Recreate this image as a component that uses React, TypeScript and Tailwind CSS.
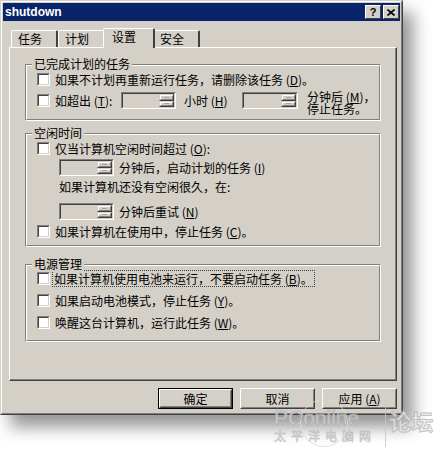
import React from "react";

const FONT = "font-['Noto_Sans_CJK_SC','Noto_Sans',sans-serif]";

// sunken 2px edge (checkbox, edit box)
function Check() {
  return (
    <span className="block w-[13px] h-[13px] shrink-0 border border-t-[#808080] border-l-[#808080] border-b-white border-r-white">
      <span className="block w-full h-full bg-white border border-t-[#404040] border-l-[#404040] border-b-[#d4d0c8] border-r-[#d4d0c8]" />
    </span>
  );
}

function SpinButton() {
  return (
    <div className="flex-1 border border-t-[#d4d0c8] border-l-[#d4d0c8] border-b-[#404040] border-r-[#404040]">
      <div className="w-full h-full bg-[#d4d0c8] border border-t-white border-l-white border-b-[#808080] border-r-[#808080] flex items-center justify-center">
        <span className="block w-[5px] h-px bg-[#a0a0a0]" />
      </div>
    </div>
  );
}

function Spin({ w }: { w: string }) {
  return (
    <div className={`${w} h-[17px] shrink-0 border border-t-[#808080] border-l-[#808080] border-b-white border-r-white`}>
      <div className="w-full h-full bg-[#d4d0c8] border border-t-[#404040] border-l-[#404040] border-b-[#d4d0c8] border-r-[#d4d0c8] flex justify-end">
        <div className="w-[15px] h-full flex flex-col">
          <SpinButton />
          <SpinButton />
        </div>
      </div>
    </div>
  );
}

function Group({ title, className, children }: { title: string; className: string; children: React.ReactNode }) {
  return (
    <div className={`relative border border-t-[#808080] border-l-[#808080] border-b-white border-r-white ${className}`}>
      <div className="h-full border border-t-white border-l-white border-b-[#808080] border-r-[#808080] pl-[10px]">
        {children}
      </div>
      <span className="absolute -top-[8px] left-[6px] bg-[#d4d0c8] px-[2px] leading-[14px]">{title}</span>
    </div>
  );
}

function Row({ children, className = "" }: { children: React.ReactNode; className?: string }) {
  return <div className={`flex items-center gap-[5px] h-[13px] ${className}`}>{children}</div>;
}

function Tab({ label, active }: { label: string; active?: boolean }) {
  if (active) {
    return (
      <div className="relative z-10 -mx-[2px] w-[52px] h-[20px] -mb-px bg-[#d4d0c8] border-t border-l border-t-white border-l-white border-r-2 border-r-[#404040] rounded-t-[2px] flex items-start pl-[8px] pt-px">
        {label}
      </div>
    );
  }
  return (
    <div className="w-[47px] h-[17px] bg-[#d4d0c8] border-t border-l border-t-white border-l-white border-r-2 border-r-[#404040] rounded-t-[2px] flex items-start pl-[6px] pt-px">
      {label}
    </div>
  );
}

function Button({ label, main }: { label: React.ReactNode; main?: boolean }) {
  return (
    <div className={`w-[75px] h-[21px] ${main ? "border border-black" : ""}`}>
      <div className="w-full h-full border border-t-white border-l-white border-b-[#404040] border-r-[#404040]">
        <div className="w-full h-full border border-t-[#d4d0c8] border-l-[#d4d0c8] border-b-[#808080] border-r-[#808080] flex items-center justify-center">
          {label}
        </div>
      </div>
    </div>
  );
}

export default function App() {
  return (
    <div className={`relative w-[441px] h-[455px] bg-white overflow-hidden text-[12px] leading-[13px] text-black ${FONT}`}>
      {/* Window */}
      <div className="w-[403px] h-[415px] bg-[#d4d0c8] border border-t-[#d4d0c8] border-l-[#d4d0c8] border-b-[#404040] border-r-[#404040] shadow-[10px_12px_16px_rgba(0,0,0,0.42)]">
        <div className="w-full h-full border border-t-white border-l-white border-b-[#808080] border-r-[#808080] pt-px px-px">
          {/* Title bar */}
          <div className="h-[18px] bg-[#0a246a] flex items-center justify-between pl-[2px] pr-px">
            <span className="text-white font-bold text-[12px] font-['Liberation_Sans',sans-serif]">shutdown</span>
            <div className="flex gap-[2px]">
              <div className="w-[16px] h-[14px] bg-[#d4d0c8] border border-t-white border-l-white border-b-[#404040] border-r-[#404040] flex items-center justify-center">
                <span className="font-['Liberation_Sans',sans-serif] font-bold text-[11px] leading-[11px]">?</span>
              </div>
              <div className="w-[16px] h-[14px] bg-[#d4d0c8] border border-t-white border-l-white border-b-[#404040] border-r-[#404040] flex items-center justify-center">
                <svg width="8" height="7" viewBox="0 0 8 7">
                  <path d="M0.5 0.5 L7.5 6.5 M7.5 0.5 L0.5 6.5" stroke="#000" strokeWidth="1.6" />
                </svg>
              </div>
            </div>
          </div>

          {/* Tabs */}
          <div className="flex items-end h-[19px] mt-[7px] pl-[8px]">
            <Tab label="任务" />
            <Tab label="计划" />
            <Tab label="设置" active />
            <Tab label="安全" />
          </div>

          {/* Panel */}
          <div className="ml-[6px] mr-[3px] h-[334px] border-t border-l border-t-white border-l-white border-b border-r border-b-[#404040] border-r-[#404040]">
            <div className="h-full border-b border-r border-b-[#808080] border-r-[#808080] pl-[15px] pr-[14px] pt-[16px]">
              <Group title="已完成计划的任务" className="h-[57px]">
                <Row className="mt-[7px]">
                  <Check />
                  <span>
                    如果不计划再重新运行任务，请删除该任务 (<u>D</u>)。
                  </span>
                </Row>
                <div className="flex items-start mt-[6px]">
                  <div className="flex items-center gap-[5px] h-[17px]">
                    <Check />
                    <span className="w-[66px]">
                      如超出 (<u>T</u>):
                    </span>
                  </div>
                  <Spin w="w-[55px]" />
                  <span className="ml-[8px] w-[58px] leading-[17px]">
                    小时 (<u>H</u>)
                  </span>
                  <Spin w="w-[56px]" />
                  <span className="ml-[9px] -mt-[1px] leading-[12px]">
                    分钟后 (<u>M</u>)，
                    <br />
                    停止任务。
                  </span>
                </div>
              </Group>

              <Group title="空闲时间" className="h-[114px] mt-[12px]">
                <Row className="mt-[7px]">
                  <Check />
                  <span>
                    仅当计算机空闲时间超过 (<u>O</u>):
                  </span>
                </Row>
                <div className="flex items-center gap-[5px] mt-[4px] ml-[22px]">
                  <Spin w="w-[55px]" />
                  <span>
                    分钟后，启动计划的任务 (<u>I</u>)
                  </span>
                </div>
                <div className="mt-[4px] ml-[22px] h-[13px]">如果计算机还没有空闲很久，在:</div>
                <div className="flex items-center gap-[5px] mt-[10px] ml-[22px]">
                  <Spin w="w-[55px]" />
                  <span>
                    分钟后重试 (<u>N</u>)
                  </span>
                </div>
                <Row className="mt-[5px]">
                  <Check />
                  <span>
                    如果计算机在使用中，停止任务 (<u>C</u>)。
                  </span>
                </Row>
              </Group>

              <Group title="电源管理" className="h-[78px] mt-[17px]">
                <Row className="mt-[6px]">
                  <Check />
                  <span className="outline-1 outline-dotted outline-[#404040] -ml-[2px] px-[1px] leading-[15px]">
                    如果计算机使用电池来运行，不要启动任务 (<u>B</u>)。
                  </span>
                </Row>
                <Row className="mt-[9px]">
                  <Check />
                  <span>
                    如果启动电池模式，停止任务 (<u>Y</u>)。
                  </span>
                </Row>
                <Row className="mt-[9px]">
                  <Check />
                  <span>
                    唤醒这台计算机，运行此任务 (<u>W</u>)。
                  </span>
                </Row>
              </Group>
            </div>
          </div>

          {/* Buttons */}
          <div className="flex justify-end gap-[7px] mt-[7px] mr-[3px]">
            <Button label="确定" main />
            <Button label="取消" />
            <Button
              label={
                <span>
                  应用 (<u>A</u>)
                </span>
              }
            />
          </div>
        </div>
      </div>

      {/* Watermark */}
      <div className="absolute left-[274px] top-[409px] flex items-start opacity-80 pointer-events-none whitespace-nowrap">
        <div className="relative flex flex-col items-start">
          <span className="absolute left-[26px] top-[-10px] w-[48px] h-[48px] rounded-full border border-[#dcdcdc]" />
          <div className="flex items-end">
            <span className="font-['Liberation_Sans',sans-serif] text-[21px] leading-[18px] text-[#e6e6e6] [-webkit-text-stroke:1px_#b4b4b4]">
              PConline
            </span>
            <span className="font-['Liberation_Sans',sans-serif] text-[6px] leading-[8px] text-[#bbbbbb] ml-px">.com.cn</span>
          </div>
          <span className="text-[12px] leading-[13px] tracking-[5px] text-[#e8e8e8] [-webkit-text-stroke:0.6px_#b4b4b4] mt-[2px]">
            太平洋电脑网
          </span>
        </div>
        <span className="ml-[4px] -mt-[6px] w-px h-[44px] bg-[#c8c8c8]" />
        <span className="ml-[3px] -mt-px text-[22px] leading-[24px] font-bold text-[#ececec] [-webkit-text-stroke:1px_#b4b4b4]">
          论坛
        </span>
      </div>
    </div>
  );
}
